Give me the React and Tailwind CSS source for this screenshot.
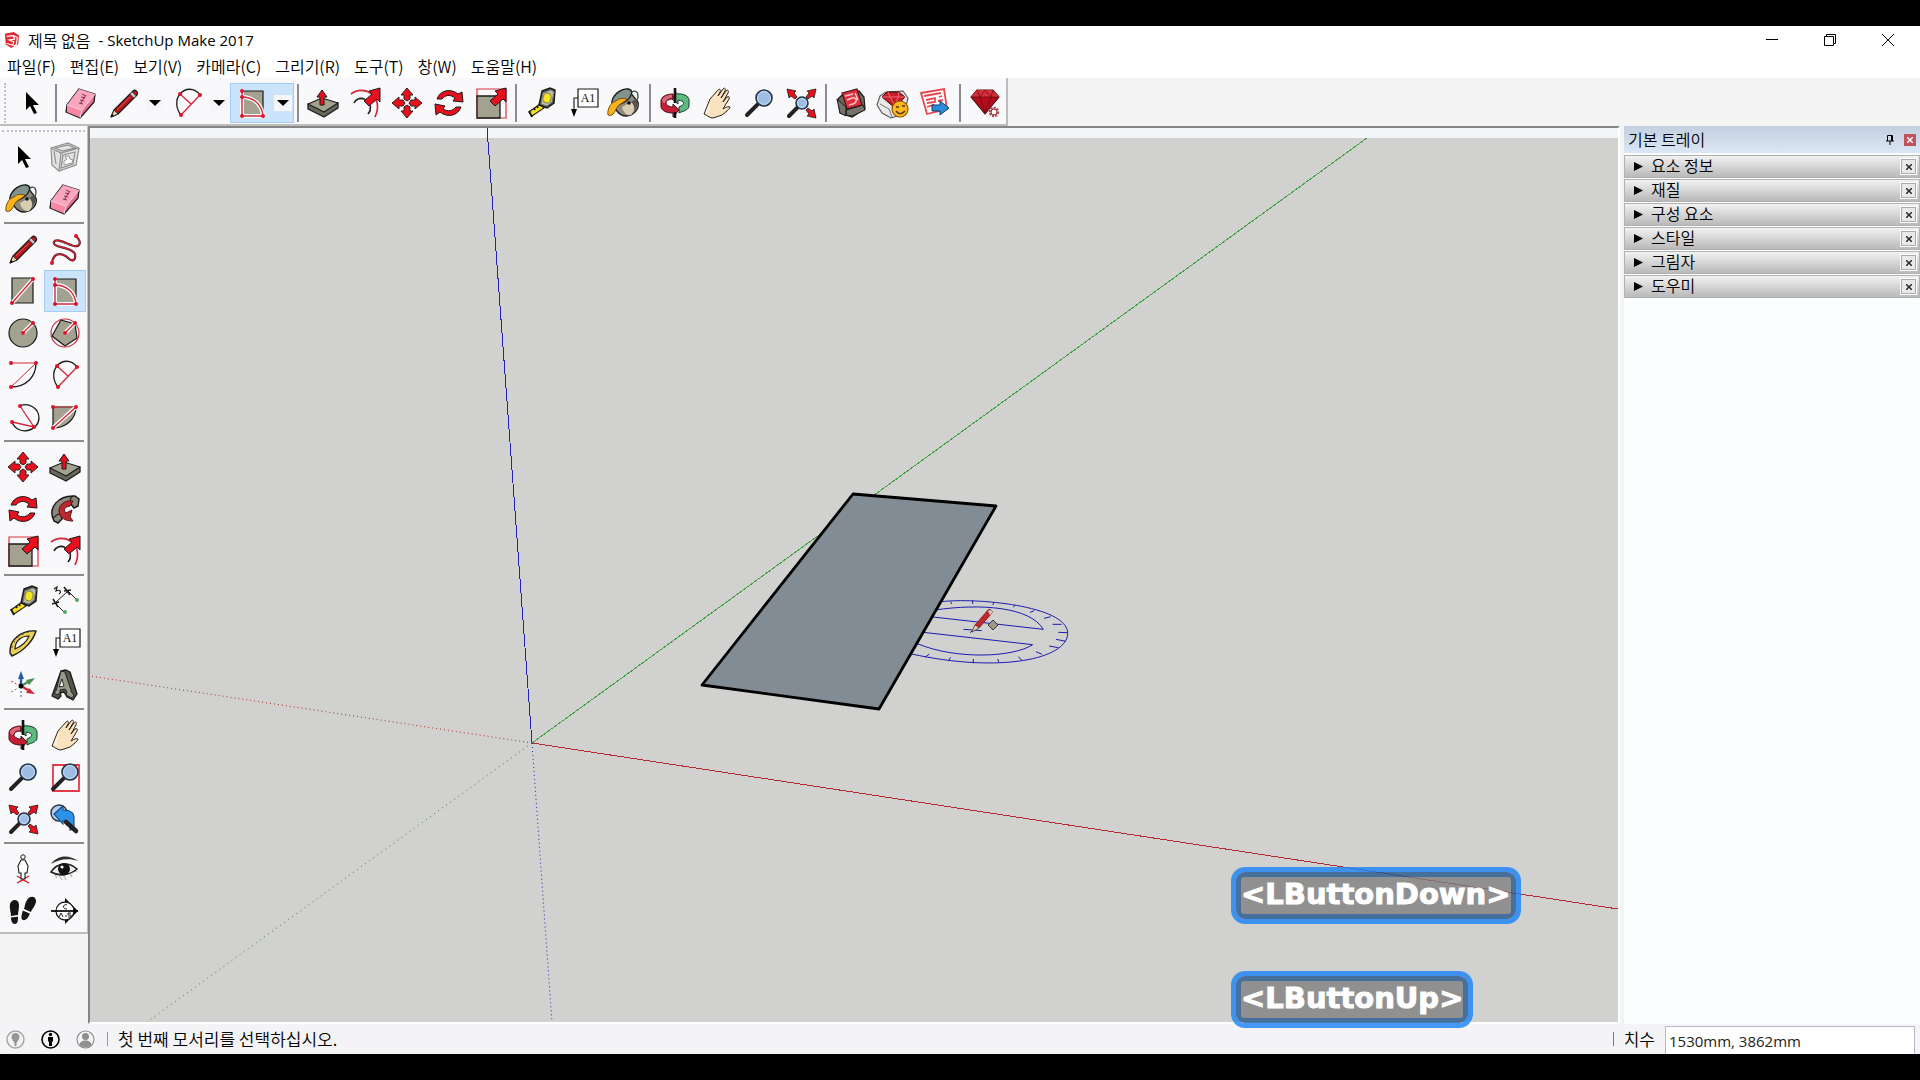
// src/App.jsx

import React from "react";

const RED = "#e8101c";
const DARK = "#1b1b1b";
const STONE = "#a3a18f";

// --- SHARED ICON PIECES ---
const Icon = ({ children }) => (
  <svg viewBox="0 0 32 32" className="size-8 overflow-visible" fill="none" aria-hidden="true">
    {children}
  </svg>
);

const Dots = ({ points }) =>
  points.map(([x, y]) => <circle key={`${x}-${y}`} cx={x} cy={y} r="2" fill="#d9142a" />);

// Red line with a white halo so it reads on top of filled shapes
const HaloLine = ({ d }) => (
  <>
    <path d={d} stroke="#fff" strokeWidth="4" strokeLinecap="round" />
    <path d={d} stroke="#d4263a" strokeWidth="1.4" />
  </>
);

const FatArrow = () => (
  <path d="M31 1 20 4l3 3-8 7 5 5 8-7 3 3z" fill={RED} stroke={DARK} strokeWidth="1" />
);

const Lens = ({ cx, cy, r, hx, hy }) => (
  <>
    <path d={`M${cx - r * 0.7} ${cy + r * 0.7} ${hx} ${hy}`} stroke="#222" strokeWidth="4" strokeLinecap="round" />
    <circle cx={cx} cy={cy} r={r} fill="#9dbde2" stroke="#243447" strokeWidth="1.6" />
    <circle cx={cx} cy={cy} r={r - 1.6} stroke="#c4daf1" strokeWidth="1" />
  </>
);

// --- ICONS ---
const icons = {
  select: (
    <Icon>
      <path d="M11 5v18l4-4 4 8 3-1-4-8h6z" fill="#000" />
    </Icon>
  ),
  component: (
    <Icon>
      <path d="M2 7 19 2l11 5-3 17-17 6-7-6z" fill="#e2e2e2" stroke="#8f8f8f" strokeWidth="1.2" />
      <path d="m2 7 10 5 18-5M12 12l-2 18M5 10l2 13M14 14l12-3-2 12-12 4zM6 7l13-3 7 3-13 3z" stroke="#8f8f8f" strokeWidth="1.2" />
      <path d="M16 15h4l1 3 3 1-1 3-8 2v-4l3-2z" fill="#fafafa" stroke="#999" />
    </Icon>
  ),
  paint: (
    <Icon>
      <path d="M22 9c0-7 7-6 7 0 0 3-1 5-3 6" stroke="#444" strokeWidth="1.3" />
      <path d="M4 14 21 5l8 10c2 7-5 14-12 14S5 22 4 14z" fill="#8d8a7c" stroke={DARK} strokeWidth="1.3" />
      <path d="m13 20 9-5c4 3 4 9 0 13-4 1-8-3-9-8z" fill="#d8cdae" />
      <path d="m22 15 5-3c2 3 2 8-2 12 1-4 0-7-3-9z" fill="#55534c" />
      <path d="M3 14C5 6 14 1 19 2s4 4 2 8-9 7-13 8-6-1-5-4z" fill="#82938f" stroke={DARK} strokeWidth="1.3" />
      <path d="M7 14C2 15-2 22-1 28c6 2 7-5 10-9 3-3 7-4 9-7-4-1-8-1-11 2z" fill="#ffb31a" stroke="#704f08" strokeWidth="1" />
      <circle cx="20" cy="16" r="1.800" fill="#111" />
    </Icon>
  ),
  eraser: (
    <Icon>
      <path d="M14 2 30 7l-1 8-14 16-14-6 1-7z" fill="#f0708f" stroke={DARK} strokeWidth="1.3" strokeLinejoin="round" />
      <path d="M14 2 30 7 17 23 2 18z" fill="#f9a5bd" />
      <path d="M2 18 17 23l-2 7-13-5z" fill="#fb87a4" />
      <path d="m2 18 15 5L30 7M17 23l-2 8" stroke="#fbd3de" strokeWidth="1" />
      <path d="m14 16 4 1m-3-4 4 1m-3-4 4 1m-3-4 4 2m-6 8 6-9" stroke="#8c3148" strokeWidth="1" />
    </Icon>
  ),
  pencil: (
    <Icon>
      <path d="m3 30 3-7L25 4c2-2 6 1 4 4L10 27z" fill="#b8191f" stroke={DARK} strokeWidth="1.2" strokeLinejoin="round" />
      <path d="m3 30 3-7 4 4z" fill="#e6cf9c" stroke={DARK} strokeWidth=".8" />
      <path d="m3 30 1-3 2 2z" fill="#000" />
      <path d="M9 23 22 10" stroke="#e0504e" strokeWidth="1" />
      <path d="m22 7 4 4 2-2-4-4z" fill="#c9c9c9" stroke="#444" strokeWidth=".7" />
    </Icon>
  ),
  freehand: (
    <Icon>
      <path d="M27 3c7 7 3 11-2 10S7 4 5 9c-2 6 19 5 21 12 1 7-3 8-7 4S5 17 3 30" stroke="#6e1720" strokeWidth="2.2" />
      <path d="M27 3c7 7 3 11-2 10S7 4 5 9c-2 6 19 5 21 12 1 7-3 8-7 4S5 17 3 30" stroke="#d62b36" strokeWidth="1" />
      <Dots points={[[27, 3], [3, 30]]} />
    </Icon>
  ),
  rectangle: (
    <Icon>
      <path d="M5 3h21v25H5z" fill={STONE} stroke={DARK} strokeWidth="1.2" />
      <HaloLine d="M5 28 26 4" />
      <Dots points={[[5, 28], [26, 4]]} />
    </Icon>
  ),
  rotatedRect: (
    <Icon>
      <path d="M6 4h21v25H6z" fill={STONE} stroke={DARK} strokeWidth="1.2" />
      <HaloLine d="M6 4v25h21M6 10c11 0 20 7 21 19" />
      <Dots points={[[6, 4], [6, 10], [6, 29], [27, 29]]} />
    </Icon>
  ),
  circle: (
    <Icon>
      <circle cx="16" cy="16" r="14" fill={STONE} stroke={DARK} strokeWidth="1.2" />
      <HaloLine d="M16 16 26 6" />
      <Dots points={[[16, 16], [26, 6]]} />
    </Icon>
  ),
  polygon: (
    <Icon>
      <path d="m12 3 14 4 2 14-12 8L3 19z" fill={STONE} stroke={DARK} strokeWidth="1.2" />
      <circle cx="16" cy="16" r="14" stroke="#c9303f" strokeWidth="1.2" />
      <HaloLine d="M16 16 26 6" />
      <Dots points={[[16, 16], [26, 6]]} />
    </Icon>
  ),
  arc: (
    <Icon>
      <path d="M29 4c0 14-10 24-25 24" stroke={DARK} strokeWidth="1.3" />
      <path d="M4 4h25L4 28" stroke="#d4263a" strokeWidth="1" />
      <Dots points={[[4, 4], [29, 4], [4, 28]]} />
    </Icon>
  ),
  twoPointArc: (
    <Icon>
      <path d="M28 8C22 0 13 1 8 7s-4 15 1 21" stroke={DARK} strokeWidth="1.3" />
      <path d="M28 8 9 28M8 7l11 10" stroke="#d4263a" strokeWidth="1.3" />
      <Dots points={[[8, 7], [28, 8], [9, 28]]} />
    </Icon>
  ),
  threePointArc: (
    <Icon>
      <path d="M13 5c8-4 19 2 19 12 0 13-21 19-27 4" stroke={DARK} strokeWidth="1.3" />
      <path d="m13 5 14 21L5 21" stroke="#d4263a" strokeWidth="1.3" />
      <Dots points={[[13, 5], [27, 26], [5, 21]]} />
    </Icon>
  ),
  pie: (
    <Icon>
      <path d="M4 6h23c0 12-10 21-23 21z" fill={STONE} stroke={DARK} strokeWidth="1.2" />
      <path d="M4 6h23" stroke="#b24c48" strokeWidth="1.4" />
      <HaloLine d="M4 27 27 6" />
      <Dots points={[[4, 6], [27, 6], [4, 27]]} />
    </Icon>
  ),
  move: (
    <Icon>
      {[0, 90, 180, 270].map((angle) => (
        <path
          key={angle}
          d="m16 1 6 7h-3v4l-3 2-3-2V8h-3z"
          fill={RED}
          stroke={DARK}
          strokeWidth=".9"
          transform={`rotate(${angle} 16 16)`}
        />
      ))}
    </Icon>
  ),
  pushPull: (
    <Icon>
      <path d="M1 17v5l16 8 14-9v-5z" fill="#68675b" stroke={DARK} strokeWidth="1.3" strokeLinejoin="round" />
      <path d="M1 17 15 11l16 5-14 9z" fill={STONE} stroke={DARK} strokeWidth="1.1" strokeLinejoin="round" />
      <path d="m15 3 5 7h-3v8h-4v-8h-3z" fill={RED} stroke={DARK} strokeWidth="1" />
    </Icon>
  ),
  rotate: (
    <Icon>
      <path d="M4 12C7 3 18 1 25 7l4-2 1 10-10-1 2-3C17 7 12 8 9 12z" fill={RED} stroke={DARK} strokeWidth="1" />
      <path d="M28 20c-3 9-14 11-21 5l-4 3-1-11 10 2-2 3c5 3 10 2 13-2z" fill={RED} stroke={DARK} strokeWidth="1" />
    </Icon>
  ),
  followMe: (
    <Icon>
      <path d="M5 28C-2 14 10 2 26 3l4 3-1 7-4 2-4-5c-7 1-12 5-9 12l1 4-4 4z" fill="#8b897d" stroke={DARK} strokeWidth="1.5" />
      <path d="M24 3c-3 2-3 5-2 7M4 25l5-4 3 1" stroke={DARK} strokeWidth="1.1" />
      <path d="M10 18c0-7 7-11 14-10l-3 5c-6 1-7 4-4 7l6-3-2 7 3 4c-8 0-13-3-14-10z" fill="#bd2930" stroke="#591014" strokeWidth="1" />
    </Icon>
  ),
  scale: (
    <Icon>
      <path d="M2 2h29v29H2z" stroke="#dc3342" strokeWidth="1.2" />
      <path d="M2 9h23v22H2z" fill={STONE} stroke={DARK} strokeWidth="1.3" />
      <FatArrow />
    </Icon>
  ),
  offset: (
    <Icon>
      <path d="M2 7C14-3 36 8 26 30" stroke="#d4263a" strokeWidth="1.7" />
      <path d="M5 16c4-9 19-4 16 8l-2 3" stroke={DARK} strokeWidth="1.6" />
      <FatArrow />
    </Icon>
  ),
  tape: (
    <Icon>
      <path d="m4 25 11-8 4 4-12 8z" fill="#f5e31e" stroke={DARK} strokeWidth="1.1" />
      <path d="m4 24 3 6M9 21l1 2m2-4 1 2" stroke={DARK} strokeWidth="1.8" />
      <path d="m17 4 8-3 5 2-1 13-7 5-8-3z" fill="#4b4b49" stroke={DARK} strokeWidth="1.4" />
      <path d="m18 6 8-3 3 2-2 10-5 4-6-2z" fill="#bdbbb1" stroke="#777" />
      <ellipse cx="22" cy="11" rx="4" ry="5" fill="#f5e526" stroke="#8b8533" transform="rotate(15 22 11)" />
    </Icon>
  ),
  dimension: (
    <Icon>
      <path d="M6 18 19 6M6 18l9 9M19 6l9 9" stroke={DARK} strokeWidth="1" />
      <path d="m4 14 5 8m-6-3 7-2m5-15 6 8m-6-4 7-1" stroke={DARK} strokeWidth="1.5" />
      <path d="m5 4 3-2-1 4c4-2 6 1 3 3" stroke={DARK} strokeWidth="1.2" />
      <circle cx="16" cy="27" r="2" fill="#55a868" />
      <circle cx="28" cy="15" r="2" fill="#55a868" />
    </Icon>
  ),
  protractor: (
    <Icon>
      <path d="M3 26C2 13 14 3 29 4 26 14 17 24 5 29z" fill="#e9cf58" stroke={DARK} strokeWidth="1.4" strokeLinejoin="round" />
      <path d="M8 22c0-8 6-13 14-13-2 5-7 10-14 13z" fill="#fafafa" stroke={DARK} strokeWidth="1.1" />
      <path d="M4 20h2m0-6 2 1m2-6 1 2m4-5 1 2m5-3v1" stroke="#594a0d" />
    </Icon>
  ),
  text: (
    <Icon>
      <path d="M11 2h20v18H11z" fill="#fff" stroke={DARK} strokeWidth="1.2" />
      <path d="M11 11H7v13" stroke={DARK} strokeWidth="1.1" />
      <path d="M4 22h6l-3 8z" fill="#000" />
      <text x="21" y="15" textAnchor="middle" fill="#111" className="font-['Liberation_Serif'] text-[12px]">A1</text>
    </Icon>
  ),
  axes: (
    <Icon>
      <path d="M14 17V8" stroke="#245ba7" strokeWidth="2.4" />
      <path d="m14 2-3 8h6z" fill="#245ba7" />
      <path d="m14 17 7-4" stroke="#439452" strokeWidth="2.2" />
      <path d="m28 9-9 2 3 5z" fill="#439452" />
      <path d="m14 17 7 4" stroke="#c72735" strokeWidth="2.2" />
      <path d="m28 25-9-1 3-5z" fill="#c72735" />
      <path d="M14 18v12" stroke="#245ba7" strokeDasharray="2 2" />
      <path d="m13 17-9-5" stroke="#c72735" strokeDasharray="2 2" />
      <path d="m13 18-9 5" stroke="#439452" strokeDasharray="2 2" />
      <circle cx="14" cy="17" r="2.4" fill="#000" />
    </Icon>
  ),
  text3d: (
    <Icon>
      <path d="m12 2 5-1 4 2 7 22-4 6-6-3-3-5-4 1 1 3-3 3-6-3z" fill="#55544d" stroke={DARK} strokeWidth="1.3" strokeLinejoin="round" />
      <path d="m12 2 4 1 7 21 2 2-2 3-6-3 1-3-2-3-5 1v3l-3 2-3-3 2-1z" fill="#99978a" stroke={DARK} strokeWidth=".9" />
      <path d="m13 10-3 8 5-1z" fill="#fafafa" stroke={DARK} strokeWidth=".9" />
    </Icon>
  ),
  orbit: (
    <Icon>
      <path d="M16 7c8-1 14 2 14 6v6c0 3-4 5-8 6l-2 1v-6l2-1c4-2 4-5-3-6v4l-6-5 4-7z" fill="#5dbb82" stroke="#173d25" strokeWidth="1" />
      <path d="M14 7C7 7 2 10 2 14v6c1 4 6 6 12 6v4l6-7-6-6v3c-4 0-7-2-7-4 0-3 4-4 7-4z" fill="#c41f35" stroke="#4a1119" strokeWidth="1" />
      <path d="M3 13c1-3 5-5 10-5v3c-4 0-6 2-7 5-2 0-3-1-3-3z" fill="#d66a78" />
      <path d="M16 1v15m0 9v6" stroke="#111" strokeWidth="2.6" />
    </Icon>
  ),
  pan: (
    <Icon>
      <path
        d="M3 27 9 12l8-9c2-2 3 0 2 2l-2 4 5-7c2-2 3 0 2 2l-4 7 5-7c2-2 3 0 2 2l-5 9 4-5c2-1 3 0 2 2l-6 10c3-2 6-3 7-2 0 2-2 2-3 4l-5 4-9 3c-3 0-5-2-9-4z"
        fill="#f9e2bd"
        stroke="#2b241a"
        strokeWidth="1"
        strokeLinejoin="round"
      />
      <path d="m4 26 5-12 1-1-2 13z" fill="#fff" opacity=".4" />
    </Icon>
  ),
  zoom: (
    <Icon>
      <Lens cx={21} cy={11} r={8} hx={4} hy={28} />
    </Icon>
  ),
  zoomWindow: (
    <Icon>
      <path d="M4 4h26v26H4z" stroke="#e33a47" strokeWidth="1.8" />
      <Lens cx={21} cy={11} r={8} hx={4} hy={28} />
    </Icon>
  ),
  zoomExtents: (
    <Icon>
      <Lens cx={17} cy={16} r={6} hx={4} hy={29} />
      {[0, 90, 270].map((angle) => (
        <path
          key={angle}
          d="m31 2-9 2 2 2-3 4 2 2 4-3 2 2z"
          fill={RED}
          stroke={DARK}
          strokeWidth=".8"
          transform={`rotate(${angle} 16.500 16.500)`}
        />
      ))}
    </Icon>
  ),
  previous: (
    <Icon>
      <circle cx="10" cy="10" r="8" fill="#b4cdea" stroke="#243447" strokeWidth="1.4" />
      <path d="m5 11 9-8v4c7 0 11 3 11 8v11l-4 1c1-6-2-9-7-9v3z" fill="#2d91e8" stroke="#164978" strokeWidth="1.1" />
      <path d="m17 19 10 9" stroke="#222" strokeWidth="4.5" strokeLinecap="round" />
    </Icon>
  ),
  camera: (
    <Icon>
      <path d="m10 23 12 7M22 23l-12 7M10 30l6-3 6 3" stroke="#d8202b" strokeWidth="1.3" />
      <circle cx="16" cy="4" r="2.200" fill="#fff" stroke={DARK} />
      <path d="M14 7h4l3 6-1 7h-2v6h-4v-6h-2l-1-7z" fill="#fff" stroke={DARK} strokeWidth="1.1" />
    </Icon>
  ),
  look: (
    <Icon>
      <path d="m5 20 3 5m2-3 3 5m2-4 2 4m4-6 2 3m2-7 3 2" stroke="#bbb" strokeWidth="1.4" />
      <path d="M2 11C8 2 20 1 29 8 20 5 10 6 2 11z" fill="#333" />
      <path d="M2 19c6-9 17-11 26-3-7 6-17 8-26 3z" fill="#eee" stroke="#222" strokeWidth="1.6" />
      <circle cx="15" cy="16" r="6" fill="#111" />
      <circle cx="13" cy="14" r="1.600" fill="#fff" />
    </Icon>
  ),
  walk: (
    <Icon>
      <path d="M3 9c2-6 9-5 9 1 0 4-1 7-1 10l-7 1c0-4-2-8-1-12zM4 22l7-1c0 4 0 8-3 8s-4-3-4-7z" fill="#151515" />
      <path d="M20 5c3-5 9-4 9 1 0 4-4 8-5 11l-7-3c1-3 1-6 3-9zM16 15l7 3c-1 4-4 8-7 7s-1-6 0-10z" fill="#151515" />
      <path d="m4 22 7-1m5-6 7 3" stroke="#fff" strokeWidth="1.2" />
    </Icon>
  ),
  section: (
    <Icon>
      <path d="M16 3v26l13-13z" fill="#000" />
      <circle cx="16" cy="16" r="9" fill="#fff" stroke={DARK} strokeWidth="1.3" />
      <path d="M2 16h27" stroke="#000" strokeWidth="1.7" />
      <path d="M18 10c-3-2-6 4 0 4" stroke="#111" />
      <path d="m10 22 2-4 2 4m2-1h2m4-3h-3v2h3v2h-3" stroke="#111" strokeWidth=".9" />
    </Icon>
  ),
  warehouse: (
    <Icon>
      <path d="m3 12 6-6 15-2 5 6 1 12-13 8-12-4z" fill="#6f6a63" stroke={DARK} strokeWidth="1.2" />
      <path d="m7 6 15-4 5 16-15 4z" fill="#e02f3a" stroke="#3b1215" strokeWidth="1.1" />
      <path d="m10 9 8-2m-6 6 5-2c5-1 6 4 1 6l-4 1m6-12 3 7" stroke="#ffc8c8" strokeWidth="1.5" />
      <path d="m2 12 9 8v9l-6-3zM11 23l17-5 2 5-13 6-6-1z" fill="#77726a" stroke={DARK} />
    </Icon>
  ),
  extensionStore: (
    <Icon>
      <path d="m3 9 6-4 17-1 5 7-4 16-13 4-9-5-5-8z" fill="#e8e8e8" stroke="#555" strokeWidth="1.1" />
      <path d="m5 10 5-5h12l6 5-10 11z" fill="#c91d2b" stroke="#41090d" strokeWidth="1" />
      <path d="M5 10h23M11 5l2 5 5 9 3-9 1-5" stroke="#ef6870" />
      <path d="m3 17 9 5 3 8" stroke="#777" />
      <circle cx="23" cy="22" r="8" fill="#ffb81c" stroke="#8b5500" strokeWidth="1.2" />
      <path d="M19 20h3m3-1h3m-9 5c3 4 6 3 9 0" stroke="#4e3200" strokeWidth="1.5" />
    </Icon>
  ),
  layout: (
    <Icon>
      <path d="m2 6 23-4 3 20-20 5z" fill="#fff" stroke="#e4484f" strokeWidth="1.8" />
      <path d="m5 9 17-3M7 13l9-2v4l-8 1m12-6 3-1M8 20l6-2v5M19 14l5-1" stroke="#e4484f" strokeWidth="1.8" />
      <path d="M13 18h8v-4l9 7-9 7v-4h-8z" fill="#278cdb" stroke="#153f67" strokeWidth="1" />
    </Icon>
  ),
  gem: (
    <Icon>
      <path d="m2 10 6-7h16l6 7-14 17z" fill="#b30d1d" stroke="#4a070d" strokeWidth="1.1" />
      <path d="m8 3 16 0 6 7H2z" fill="#d52f3b" />
      <path d="M2 10h28M8 3l3 7 5 16 6-16 2-7M11 10l5-7 6 7" stroke="#6f0a13" strokeWidth=".8" />
      <circle cx="25" cy="25" r="4" fill="#fafafa" stroke="#b04b50" strokeWidth="2.6" strokeDasharray="2 1" />
      <circle cx="25" cy="25" r="3" stroke="#8c3037" />
    </Icon>
  ),
};

// --- DATA ---
const menus = ["파일(F)", "편집(E)", "보기(V)", "카메라(C)", "그리기(R)", "도구(T)", "창(W)", "도움말(H)"];

const topGroups = [
  [["select", "선택"]],
  [
    ["eraser", "지우개"],
    ["pencil", "선", "menu"],
    ["twoPointArc", "호", "menu"],
    ["rotatedRect", "회전된 직사각형", "active"],
  ],
  [["pushPull", "밀기/끌기"], ["offset", "오프셋"], ["move", "이동"], ["rotate", "회전"], ["scale", "배율"]],
  [["tape", "줄자"], ["text", "텍스트"], ["paint", "페인트통"]],
  [["orbit", "궤도"], ["pan", "이동 보기"], ["zoom", "확대/축소"], ["zoomExtents", "범위 확대"]],
  [["warehouse", "3D Warehouse"], ["extensionStore", "Extension Warehouse"], ["layout", "LayOut"]],
  [["gem", "확장 관리자"]],
];

const sideGroups = [
  ["select", "component", "paint", "eraser"],
  ["pencil", "freehand", "rectangle", "rotatedRect", "circle", "polygon", "arc", "twoPointArc", "threePointArc", "pie"],
  ["move", "pushPull", "rotate", "followMe", "scale", "offset"],
  ["tape", "dimension", "protractor", "text", "axes", "text3d"],
  ["orbit", "pan", "zoom", "zoomWindow", "zoomExtents", "previous"],
  ["camera", "look", "walk", "section"],
];

const trays = ["요소 정보", "재질", "구성 요소", "스타일", "그림자", "도우미"];

// --- WINDOW CHROME ---
const TitleBar = () => (
  <header className="flex h-7 shrink-0 items-center bg-white pl-1">
    <svg viewBox="0 0 18 20" className="h-5 w-4" aria-hidden="true">
      <path d="m1 3 10-2 6 4-1 10-8 4-6-4z" fill="#df2b32" />
      <path d="m3 6 7-1 2 4-6 1 5 2-1 4-7-2m7-9 5 2-1 8-3 2" fill="none" stroke="#fff" strokeWidth="1.3" />
    </svg>
    <h1 className="ml-2 flex flex-1 gap-2 text-[16px] leading-7">
      <span className="font-[350]">제목 없음</span>
      <span className="font-['Open_Sans',sans-serif] text-[15px]">- SketchUp Make 2017</span>
    </h1>
    <div className="flex gap-[34px] pr-5">
      <button aria-label="최소화" className="flex size-6 items-center justify-center">
        <svg viewBox="0 0 12 12" className="size-3" stroke="#000"><path d="M0 5.500h12" /></svg>
      </button>
      <button aria-label="이전 크기로" className="flex size-6 items-center justify-center">
        <svg viewBox="0 0 12 12" className="size-3 overflow-visible" fill="none" stroke="#000">
          <path d="M.5 2.500h9v9h-9zM2.500 2.500v-2h9v9h-2" />
        </svg>
      </button>
      <button aria-label="닫기" className="flex size-6 items-center justify-center">
        <svg viewBox="0 0 12 12" className="size-3" stroke="#000"><path d="m0 0 12 12M12 0 0 12" /></svg>
      </button>
    </div>
  </header>
);

const MenuBar = () => (
  <nav className="flex h-6 shrink-0 items-center gap-[14px] bg-white pl-[7px]">
    {menus.map((menu) => (
      <button key={menu} className="text-[16px] leading-6 font-[350]">{menu}</button>
    ))}
  </nav>
);

const ToolButton = ({ icon, label, mode }) => {
  const active = mode === "active";
  if (!mode) {
    return (
      <button aria-label={label} className="flex h-10 w-[42px] items-center justify-center">
        {icons[icon]}
      </button>
    );
  }
  return (
    <div className={active ? "flex h-10 w-16 bg-[#cce4fb] outline -outline-offset-1 outline-[#a5cdf1]" : "flex h-10 w-16"}>
      <button aria-label={label} className="flex w-11 items-center justify-center">
        {icons[icon]}
      </button>
      <button aria-label={`${label} 메뉴`} className="my-auto flex h-4 w-[18px] items-center justify-center bg-[#f6f6f8]">
        <svg viewBox="0 0 12 6" className="h-[6px] w-3"><path d="M0 0h12L6 6z" /></svg>
      </button>
    </div>
  );
};

const TopToolbar = () => (
  <div className="flex h-12 shrink-0 bg-[#f4f4f4]">
    <div className="flex items-center border-r-2 border-b-2 border-[#bdbdbd] bg-[#f9f8fa] pt-[3px]">
      <div className="mr-1 ml-1 h-10 border-l-2 border-dotted border-[#c2c2c2]" />
      {topGroups.map((group, index) => (
        <React.Fragment key={group[0][0]}>
          {index > 0 && <div className="mx-[3px] h-[38px] w-[2px] bg-[#8d8d8d]" />}
          {group.map(([icon, label, mode]) => (
            <ToolButton key={icon} icon={icon} label={label} mode={mode} />
          ))}
        </React.Fragment>
      ))}
    </div>
  </div>
);

const SideToolbar = () => (
  <aside className="w-[88px] shrink-0 bg-[#f4f4f4]">
    <div className="border-r border-b-2 border-[#bdbdbd] bg-[#f9f8fa] pt-1 pl-[2px]">
      <div className="mr-[2px] mb-1 border-t-2 border-dotted border-[#c2c2c2]" />
      {sideGroups.map((group, index) => (
        <div key={group[0]}>
          {index > 0 && <div className="mt-[2px] mr-[3px] mb-1 ml-[2px] h-[2px] bg-[#8d8d8d]" />}
          <div className="grid grid-cols-[42px_42px]">
            {group.map((icon) => (
              <button
                key={icon}
                aria-label={icon}
                className={
                  icon === "rotatedRect"
                    ? "flex h-[42px] items-center justify-center bg-[#cce4fb] outline -outline-offset-1 outline-[#a5cdf1]"
                    : "flex h-[42px] items-center justify-center"
                }
              >
                {icons[icon]}
              </button>
            ))}
          </div>
        </div>
      ))}
    </div>
  </aside>
);

// --- MODEL VIEW ---
const protractorTicks =
  "M812 395l3 7M878 391v11M943 396l-5 9M1005 405l-5 7M1063 422l-13 5M1112 440l-20 5M1145 463h-27M1163 488l-28-1M1158 514l-30-6M1135 533l-28-5M1086 553l-18-8M1025 570l-10-10M957 577l-4-10M880 580v-13M805 573l7-11M735 562l13-10";

const Scene = () => (
  <svg
    viewBox="90 128 1528 894"
    preserveAspectRatio="xMinYMin slice"
    className="absolute inset-0 size-full"
    fill="none"
    role="img"
    aria-label="모델"
  >
    <path d="M90 128h1528v10H90z" fill="#f3f5f7" />
    <g shapeRendering="crispEdges">
      <path d="M532 743 487 128" stroke="#2424b4" />
      <path d="m532 743 835-605" stroke="#3fa03f" />
      <path d="m532 743 1086 166" stroke="#b52830" />
    </g>
    <path d="m532 743 20 279" stroke="#2424b4" strokeDasharray="1 3" />
    <path d="M532 743 147 1022" stroke="#3c7a3c" strokeDasharray="1 4" />
    <path d="M532 743 90 676" stroke="#b52830" strokeDasharray="1 3" />
    <g transform="translate(680 470) scale(.33333)" stroke="#1c1cb0" strokeWidth="3">
      <path d="M785 395C880 383 1163 405 1163 490 1163 567 960 610 695 552" />
      <path d="M765 420C900 400 1050 410 1090 478L750 440M730 487l328 37C1000 562 830 570 712 521M850 478l55 4M870 488l22-16" />
      <path d={protractorTicks} />
    </g>
    <path d="m853 494 143 12-117 203-177-24z" fill="#828c94" stroke="#000" strokeWidth="2.800" strokeLinejoin="round" />
    <path d="m972 632 3-7 13-15c2-2 5 1 4 3l-13 15z" fill="#c6252c" stroke="#5c2a2a" strokeWidth=".8" />
    <path d="m972 632 3-7 4 3z" fill="#ddd0b0" stroke="#444" strokeWidth=".6" />
    <path d="m988 611 2-1c2 0 3 2 2 3l-2 2z" fill="#ccc" />
    <path d="m993 620 5 5-5 5-5-5z" fill="#9b9a88" stroke="#3b3b33" />
  </svg>
);

const KeyBadge = ({ children }) => (
  <div className="rounded-[14px] border-5 border-[#1882f8]/80 bg-clip-padding">
    <div className="rounded-[9px] border-5 border-[#24568f]/80">
      <div className="h-[37px] rounded-[2px] bg-[#7f7f7f]/80 font-['DejaVu_Sans',sans-serif] text-[29px] leading-[35px] font-bold text-white [-webkit-text-stroke:1px_white]">
        {children}
      </div>
    </div>
  </div>
);

const Viewport = () => (
  <main className="relative min-w-0 flex-1 border-t-2 border-r-2 border-b-2 border-l-2 border-t-[#858585] border-r-white border-b-white border-l-[#858585] bg-[#d1d1cf]">
    <Scene />
    <div className="absolute right-0 -bottom-[6px] flex w-[387px] flex-col items-start gap-[47px]">
      <KeyBadge>&lt;LButtonDown&gt;</KeyBadge>
      <KeyBadge>&lt;LButtonUp&gt;</KeyBadge>
    </div>
  </main>
);

// --- TRAY ---
const Tray = () => (
  <aside className="ml-1 flex w-[296px] shrink-0 flex-col bg-[#fbfeff]">
    <div className="flex h-[27px] items-center bg-linear-to-b from-[#c4d0df] to-[#dce7f6] pr-1 pl-[4px]">
      <h2 className="flex-1 pb-[2px] text-[16px] leading-6 font-[350]">기본 트레이</h2>
      <button aria-label="고정" className="mr-2 flex size-3 items-center justify-center">
        <svg viewBox="0 0 8 10" className="h-[10px] w-2" fill="none" stroke="#000">
          <path d="M1.500 6V.5h5V6M0 6h8M4 6v4M5.500 1v5" />
        </svg>
      </button>
      <button aria-label="트레이 닫기" className="flex size-3 items-center justify-center bg-[#c0545c]">
        <svg viewBox="0 0 6 6" className="size-[6px]" stroke="#fff" strokeWidth="1.400"><path d="m0 0 6 6M6 0 0 6" /></svg>
      </button>
    </div>
    <div className="mt-[2px] flex flex-col gap-px">
      {trays.map((tray) => (
        <section key={tray} className="flex h-[23px] items-center border border-[#b2b2b2] bg-linear-to-b from-[#f2f2f2] to-[#b9b9b9] pr-[2px] pl-[9px]">
          <button className="flex flex-1 items-center gap-2 text-left text-[16px] leading-5 font-[350]">
            <svg viewBox="0 0 9 9" className="size-[9px]"><path d="M0 0l9 4.500L0 9z" /></svg>
            <span className="pb-1">{tray}</span>
          </button>
          <button aria-label={`${tray} 닫기`} className="flex size-[17px] items-center justify-center border border-white bg-[#e9e9e9] outline -outline-offset-2 outline-[#aaa]">
            <svg viewBox="0 0 6 6" className="size-[6px]" stroke="#222" strokeWidth="1.400"><path d="m0 0 6 6M6 0 0 6" /></svg>
          </button>
        </section>
      ))}
    </div>
  </aside>
);

// --- STATUS BAR ---
const StatusBar = () => (
  <footer className="flex h-[30px] shrink-0 items-center bg-[#f4f3f5] pr-[5px] pl-[6px]">
    <div className="flex gap-4">
      <button aria-label="위치">
        <svg viewBox="0 0 19 19" className="size-[19px]" fill="none">
          <circle cx="9.500" cy="9.500" r="8.500" stroke="#a5a5a5" strokeWidth="1.400" />
          <path d="M9.500 3c4 0 5 4 3 7l-2 3v3h-2v-3l-2-3c-2-3-1-7 3-7z" fill="#969696" />
        </svg>
      </button>
      <button aria-label="크레딧">
        <svg viewBox="0 0 19 19" className="size-[19px]" fill="none">
          <circle cx="9.500" cy="9.500" r="8.500" stroke="#000" strokeWidth="1.600" />
          <circle cx="9.500" cy="4.500" r="1.700" fill="#000" />
          <path d="M7 7h5v4l-1 1v4H8v-4l-1-1z" fill="#000" />
        </svg>
      </button>
      <button aria-label="로그인">
        <svg viewBox="0 0 19 19" className="size-[19px]" fill="none">
          <circle cx="9.500" cy="9.500" r="8.500" stroke="#8f8f8f" strokeWidth="1.200" />
          <circle cx="9.500" cy="6.500" r="3.500" fill="#8f8f8f" />
          <path d="M3.500 15c0-6 12-6 12 0-3 3-9 3-12 0z" fill="#8f8f8f" />
        </svg>
      </button>
    </div>
    <div className="mr-[10px] ml-3 h-[14px] w-px bg-[#999]" />
    <p className="flex-1 text-[17px] leading-7 font-[350]">첫 번째 모서리를 선택하십시오.</p>
    <div className="mr-[10px] h-[14px] w-px bg-[#777]" />
    <label htmlFor="measure" className="mr-[10px] text-[17px] leading-7 font-[350]">치수</label>
    <input
      id="measure"
      defaultValue="1530mm, 3862mm"
      className="mt-[2px] h-7 w-[250px] border border-b-0 border-[#b6b9c9] bg-white px-[3px] font-['Open_Sans',sans-serif] text-[15px] leading-6 text-[#222]"
    />
  </footer>
);

// --- MAIN COMPONENT ---
const App = () => (
  <div className="flex h-screen flex-col overflow-hidden bg-black py-[26px] font-['Noto_Sans_CJK_KR',sans-serif] text-black">
    <div className="flex min-h-0 flex-1 flex-col bg-[#f4f4f4]">
      <TitleBar />
      <MenuBar />
      <TopToolbar />
      <div className="relative z-10 flex min-h-0 flex-1">
        <SideToolbar />
        <Viewport />
        <Tray />
      </div>
      <StatusBar />
    </div>
  </div>
);

export default App;
